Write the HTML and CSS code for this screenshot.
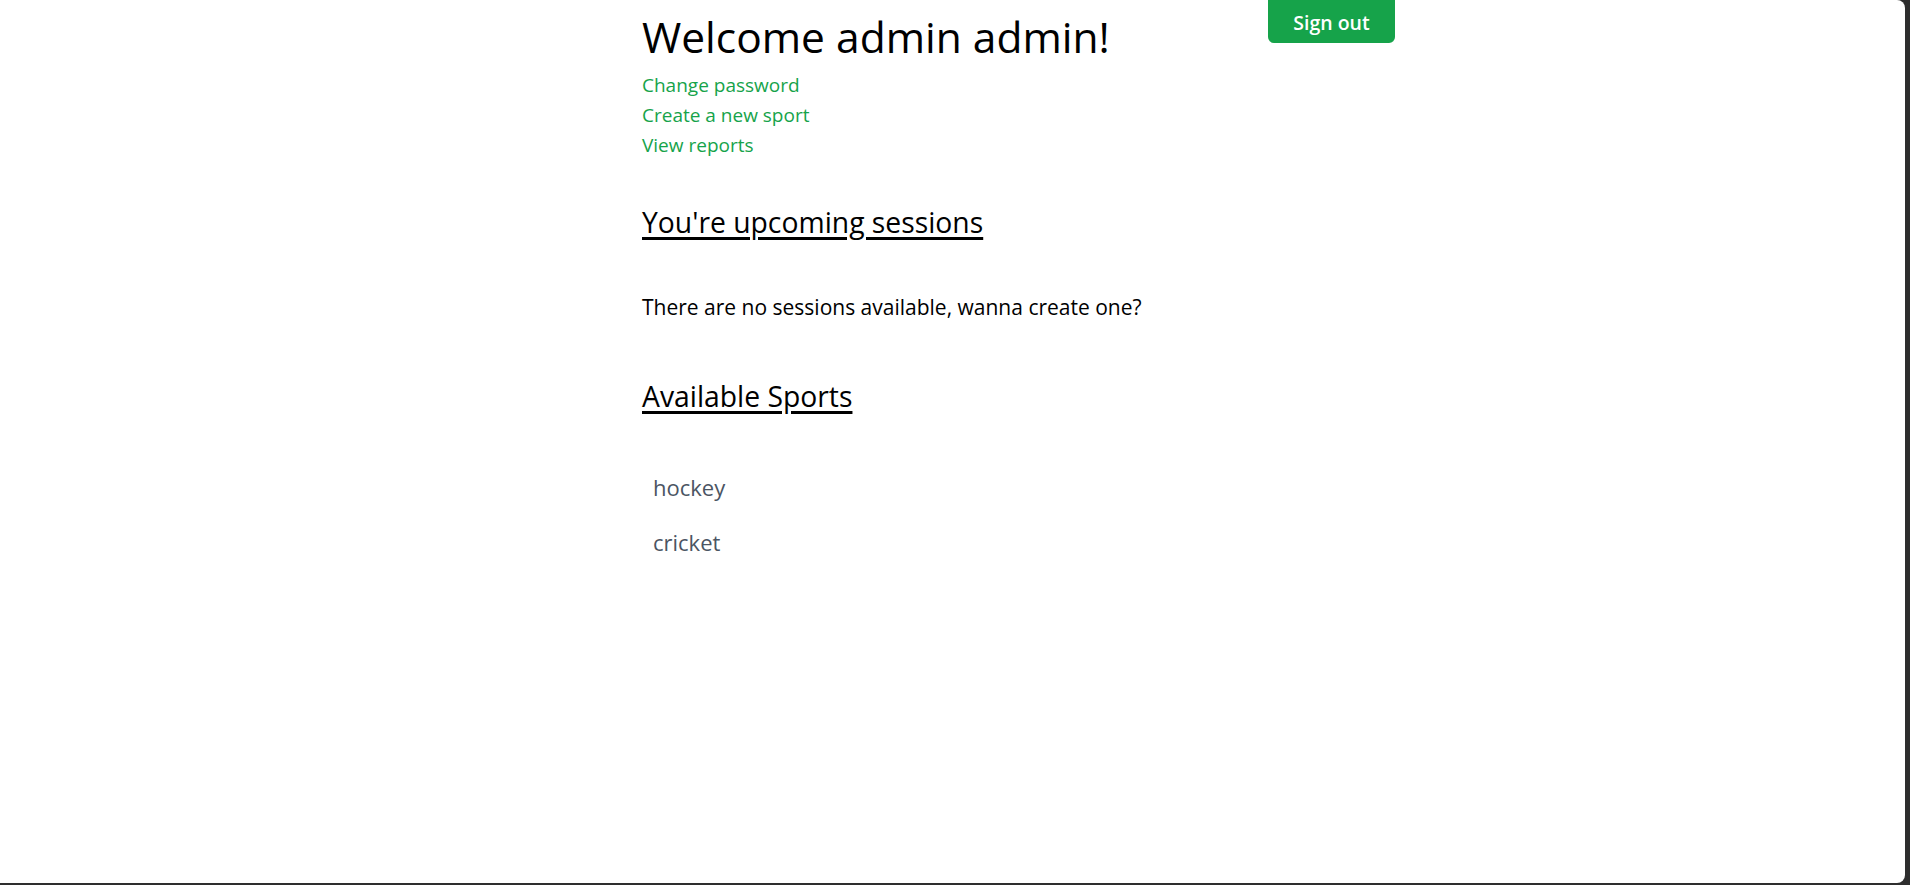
FILE: index.html
```html
<!DOCTYPE html>
<html lang="en">
<head>
<meta charset="utf-8">
<title>Dashboard</title>
<link rel="stylesheet" href="styles.css">
</head>
<body>
<div class="window">
  <div class="content">
    <header class="top">
      <div class="intro">
        <h1 class="welcome">Welcome admin admin!</h1>
        <nav class="links">
          <a href="#">Change password</a>
          <a href="#">Create a new sport</a>
          <a href="#">View reports</a>
        </nav>
      </div>
      <button class="signout" type="button">Sign out</button>
    </header>

    <section class="block block-sessions">
      <h2 class="section-title">You're upcoming sessions</h2>
      <p class="empty">There are no sessions available, wanna create one?</p>
    </section>

    <section class="block block-sports">
      <h2 class="section-title">Available Sports</h2>
      <ul class="sports">
        <li>hockey</li>
        <li>cricket</li>
      </ul>
    </section>
  </div>
</div>
</body>
</html>
```

FILE: styles.css
```css
* { box-sizing: border-box; }

html, body {
  margin: 0;
  padding: 0;
  background: #2e2e2e;
}

body {
  font-family: "Open Sans", "Noto Sans", sans-serif;
  color: #000;
}

.window {
  width: 1905px;
  height: 883px;
  background: #fff;
  border-top-right-radius: 8px;
  border-bottom-right-radius: 8px;
  overflow: hidden;
}

.content {
  margin-left: 642px;
  width: 753px;
}

.top {
  display: flex;
  justify-content: space-between;
  align-items: flex-start;
}

.welcome {
  margin: 12px 0 0;
  font-size: 42.5px;
  line-height: 50px;
  font-weight: 400;
}

.links {
  display: flex;
  flex-direction: column;
  margin-top: 8px;
}

.links a {
  color: #16a34a;
  text-decoration: none;
  font-size: 19px;
  line-height: 30px;
}

.signout {
  width: 127px;
  height: 43px;
  border: 0;
  border-radius: 0 0 6px 6px;
  background: #16a34a;
  color: #fff;
  font-family: inherit;
  font-size: 19.5px;
  font-weight: 600;
  padding: 2px 0 0;
}

.block-sessions {
  margin-top: 44px;
}

.block-sports {
  margin-top: 56px;
}

.section-title {
  margin: 0;
  font-size: 28.3px;
  line-height: 36px;
  font-weight: 400;
  text-decoration: underline;
  text-decoration-thickness: 3px;
  text-underline-offset: 4px;
}

.empty {
  margin: 52px 0 0;
  font-size: 21px;
  line-height: 30px;
}

.sports {
  list-style: none;
  margin: 46px 0 0;
  padding: 0;
}

.sports li {
  padding: 10px 11px;
  font-size: 22px;
  line-height: 35px;
  color: #4b5563;
}
```
